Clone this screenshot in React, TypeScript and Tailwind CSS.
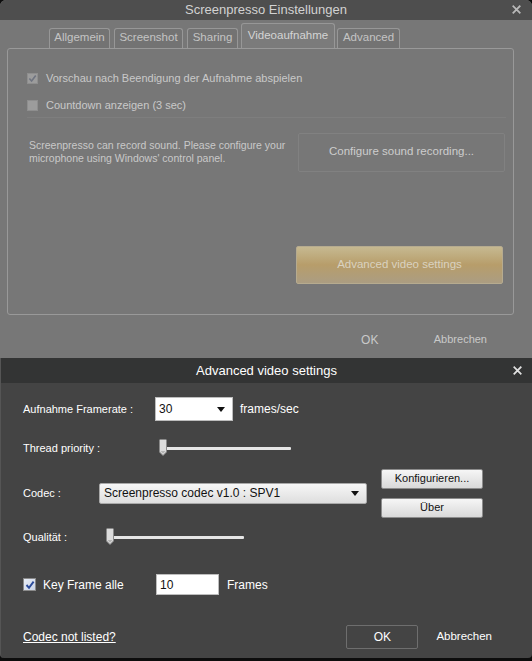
import React from "react";

const FONT = { fontFamily: '"Liberation Sans", Arial, sans-serif' };

function CloseX({ className }: { className: string }) {
  return (
    <svg viewBox="0 0 10 10" className={`w-[9px] h-[9px] ${className}`}>
      <path d="M1.5 1.5 L8.5 8.5 M8.5 1.5 L1.5 8.5" stroke="currentColor" strokeWidth={2} strokeLinecap="square" />
    </svg>
  );
}

function Tab({ label, active, w, ml }: { label: string; active?: boolean; w: string; ml: string }) {
  return (
    <div
      className={`flex items-center justify-center rounded-t-[3px] border border-b-0 border-[#979797] text-[11.5px] ${w} ${ml} ${
        active ? "h-[25px] bg-[#7b7b7b] text-[#d4d4d4]" : "h-[20px] bg-[#737373] text-[#c4c4c4]"
      }`}
    >
      {label}
    </div>
  );
}

function DimCheck({ checked, label }: { checked?: boolean; label: string }) {
  return (
    <div className="flex items-center gap-[8px] h-[14px]">
      <div className="w-[11px] h-[11px] border border-[#8e8e8e] bg-[#9c9c9c] flex items-center justify-center">
        {checked && (
          <svg viewBox="0 0 10 10" className="w-[9px] h-[9px]">
            <path d="M1.5 5 L4 7.8 L8.6 1.6" fill="none" stroke="#6f7480" strokeWidth={1.8} />
          </svg>
        )}
      </div>
      <span className="text-[11px] text-[#c9c9c9]">{label}</span>
    </div>
  );
}

function Slider({ width }: { width: number }) {
  return (
    <div className="relative h-[20px] flex items-center" style={{ width }}>
      <div className="h-[3px] w-full bg-[#e6e6e6] rounded-[1px]" />
      <div className="absolute left-0 top-[1px] w-[8px] h-[17px]">
        <svg viewBox="0 0 8 17" className="w-[8px] h-[17px]">
          <path d="M0.5 1.5 Q0.5 0.5 1.5 0.5 L6.5 0.5 Q7.5 0.5 7.5 1.5 L7.5 13 L4 16.5 L0.5 13 Z" fill="#dcdcdc" stroke="#8a8a8a" strokeWidth={1} />
          <path d="M1.5 12 L6.5 12 L4 14.8 Z" fill="#b4b4b4" />
        </svg>
      </div>
    </div>
  );
}

function GreyButton({ label }: { label: string }) {
  return (
    <div className="h-[20px] w-[102px] rounded-[2px] border border-[#8c8c8c] bg-gradient-to-b from-[#f6f6f6] to-[#d9d9d9] flex items-center justify-center text-[11px] text-[#111]">
      {label}
    </div>
  );
}

function Arrow() {
  return (
    <svg viewBox="0 0 8 5" className="w-[8px] h-[5px]">
      <path d="M0 0 L8 0 L4 5 Z" fill="#111" />
    </svg>
  );
}

export default function App() {
  return (
    <div className="w-[532px] h-[661px] bg-[#0d0d0d] flex flex-col overflow-hidden" style={FONT}>
      {/* Settings window (dimmed) */}
      <div className="h-[358px] rounded-t-[6px] bg-[#777777] flex flex-col overflow-hidden">
        <div className="h-[24px] bg-[#4e4e4e] grid grid-cols-[40px_1fr_40px] items-center">
          <div />
          <div className="text-center text-[13px] text-[#d2d2d2]">Screenpresso Einstellungen</div>
          <div className="flex justify-end pr-[11px]">
            <CloseX className="text-[#b9b9b9]" />
          </div>
        </div>
        <div className="pl-[7px] pr-[18px] flex flex-col flex-1">
          <div className="flex items-end pl-[42px] h-[28px]">
            <Tab label="Allgemein" w="w-[61px]" ml="ml-0" />
            <Tab label="Screenshot" w="w-[69px]" ml="ml-[4px]" />
            <Tab label="Sharing" w="w-[51px]" ml="ml-[4px]" />
            <Tab label="Videoaufnahme" active w="w-[94px]" ml="ml-[3px]" />
            <Tab label="Advanced" w="w-[63px]" ml="ml-[2px]" />
          </div>
          <div className="h-[267px] border border-[#999999] rounded-[3px] flex flex-col pl-[19px] pr-[8px]">
            <div className="mt-[23px]">
              <DimCheck checked label="Vorschau nach Beendigung der Aufnahme abspielen" />
            </div>
            <div className="mt-[13px]">
              <DimCheck label="Countdown anzeigen (3 sec)" />
            </div>
            <div className="mt-[4px] mr-[-1px] h-px bg-[#7e7e7e]" />
            <div className="mt-[15px] flex items-center justify-between">
              <div className="whitespace-nowrap text-[10.5px] leading-[13px] text-[#c9c9c9] pl-[2px]">
                Screenpresso can record sound. Please configure your
                <br />
                microphone using Windows' control panel.
              </div>
              <div className="shrink-0 w-[207px] h-[39px] border border-[#818181] rounded-[2px] flex items-center justify-center text-[11.5px] text-[#cdcdcd]">
                Configure sound recording...
              </div>
            </div>
            <div className="mt-[74px] flex justify-end pr-[2px]">
              <div className="w-[207px] h-[38px] rounded-[2px] border border-[#b6ab8f] bg-gradient-to-b from-[#c6b991] via-[#b79d6a] to-[#ab9d82] flex items-center justify-center text-[11.5px] text-[#d9d2c0]">
                Advanced video settings
              </div>
            </div>
          </div>
          <div className="flex justify-end items-center h-[40px] mt-[5px] pr-[27px] text-[12px] text-[#c9c9c9]">
            <span className="w-[28px] text-center">OK</span>
            <span className="ml-[50px] text-[11px]">Abbrechen</span>
          </div>
          <div className="flex-1" />
        </div>
        <div className="h-[2px] bg-[#848484]" />
      </div>

      {/* Advanced video settings dialog */}
      <div className="h-[300px] rounded-b-[4px] bg-[#444444] flex flex-col overflow-hidden border-l border-[#555]">
        <div className="h-[25px] bg-[#333434] grid grid-cols-[40px_1fr_40px] items-center">
          <div />
          <div className="text-center text-[13px] text-white">Advanced video settings</div>
          <div className="flex justify-end pr-[10px]">
            <CloseX className="text-[#e0e0e0]" />
          </div>
        </div>
        <div className="flex flex-col pl-[22px] text-[11px] text-white">
          <div className="mt-[14px] h-[24px] flex items-center">
            <span className="w-[132px]">Aufnahme Framerate :</span>
            <div className="w-[78px] h-[24px] bg-white border border-[#bdbdbd] flex items-center justify-between pl-[3px] pr-[7px] text-[#111] text-[12px]">
              <span>30</span>
              <Arrow />
            </div>
            <span className="ml-[7px] text-[12px]">frames/sec</span>
          </div>
          <div className="mt-[17px] h-[20px] flex items-center">
            <span className="w-[136px]">Thread priority :</span>
            <Slider width={132} />
          </div>
          <div className="mt-[10px] h-[50px] flex items-center">
            <span className="w-[76px]">Codec :</span>
            <div className="w-[268px] h-[21px] rounded-[2px] border border-[#a9a9a9] bg-gradient-to-b from-[#f7f7f7] to-[#dedede] flex items-center justify-between pl-[4px] pr-[7px] text-[12px] text-[#111]">
              <span>Screenpresso codec v1.0 : SPV1</span>
              <Arrow />
            </div>
            <div className="ml-[14px] flex flex-col gap-[9px]">
              <GreyButton label="Konfigurieren..." />
              <GreyButton label="Über" />
            </div>
          </div>
          <div className="mt-[9px] h-[20px] flex items-center">
            <span className="w-[83px]">Qualität :</span>
            <Slider width={138} />
          </div>
          <div className="mt-[27px] h-[21px] flex items-center">
            <div className="w-[13px] h-[13px] border border-[#8a8a8a] bg-gradient-to-br from-[#e9eef8] to-[#c9d3e6] flex items-center justify-center">
              <svg viewBox="0 0 10 10" className="w-[10px] h-[10px]">
                <path d="M1.5 5 L4 7.8 L8.6 1.6" fill="none" stroke="#2a4a9a" strokeWidth={1.9} />
              </svg>
            </div>
            <span className="ml-[7px] w-[113px] text-[12px]">Key Frame alle</span>
            <div className="w-[63px] h-[21px] bg-white border border-[#bdbdbd] flex items-center pl-[3px] text-[12px] text-[#111]">
              10
            </div>
            <span className="ml-[8px] text-[12px]">Frames</span>
          </div>
          <div className="mt-[30px] h-[24px] flex items-center pr-[40px]">
            <span className="underline text-[12px]">Codec not listed?</span>
            <div className="flex-1" />
            <div className="w-[72px] h-[24px] border border-[#6e6e6e] rounded-[2px] flex items-center justify-center text-[12px]">
              OK
            </div>
            <span className="ml-[18px] text-[11.5px]">Abbrechen</span>
          </div>
        </div>
      </div>
    </div>
  );
}
